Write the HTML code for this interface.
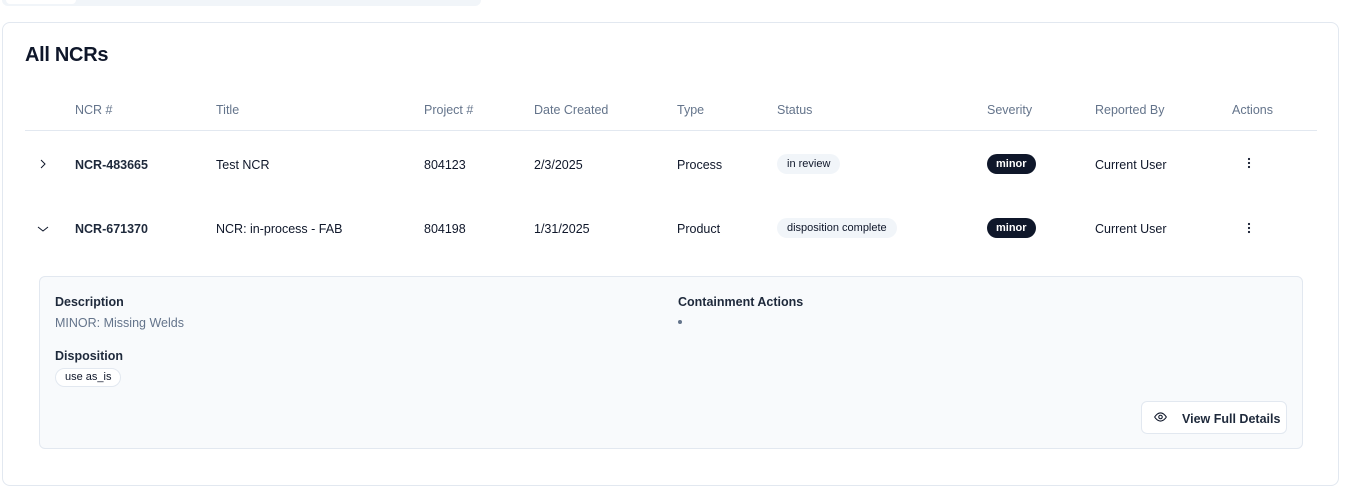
<!DOCTYPE html>
<html><head><style>
*{margin:0;padding:0;box-sizing:border-box}
body{width:1356px;height:496px;background:#fff;font-family:"Liberation Sans",sans-serif;color:#0f172a;position:relative;overflow:hidden;font-size:12.5px}
.a{position:absolute;white-space:nowrap}
.t{margin-top:1px}
.h{color:#64748b;font-size:12.5px}
.b{font-weight:bold;color:#1e293b}
.pill{position:absolute;border-radius:10px;font-size:11px;height:20px;line-height:20px;padding:0 10px}
</style></head><body>
<div class="a" style="left:2px;top:-6px;width:479px;height:12px;background:#f1f5f9;border-radius:6px"></div>
<div class="a" style="left:6px;top:-6px;width:70px;height:10px;background:#fff;border-radius:4px"></div>
<div class="a" style="left:2px;top:22px;width:1337px;height:464px;border:1px solid #e2e8f0;border-radius:8px"></div>
<div class="a t" style="left:25px;top:43px;font-size:20px;font-weight:600;letter-spacing:-0.3px">All NCRs</div>
<div class="a h t" style="left:75px;top:102px">NCR #</div>
<div class="a h t" style="left:216px;top:102px">Title</div>
<div class="a h t" style="left:424px;top:102px">Project #</div>
<div class="a h t" style="left:534px;top:102px">Date Created</div>
<div class="a h t" style="left:677px;top:102px">Type</div>
<div class="a h t" style="left:777px;top:102px">Status</div>
<div class="a h t" style="left:987px;top:102px">Severity</div>
<div class="a h t" style="left:1095px;top:102px">Reported By</div>
<div class="a h t" style="left:1232px;top:102px">Actions</div>
<div class="a" style="left:25px;top:130px;width:1292px;height:1px;background:#e2e8f0"></div>

<svg class="a" style="left:37px;top:158px" width="12" height="12" viewBox="0 0 12 12"><path d="M4 2l4 4-4 4" fill="none" stroke="#0f172a" stroke-width="1"/></svg>
<div class="a b t" style="left:75px;top:157px">NCR-483665</div>
<div class="a t" style="left:216px;top:157px">Test NCR</div>
<div class="a t" style="left:424px;top:157px">804123</div>
<div class="a t" style="left:534px;top:157px">2/3/2025</div>
<div class="a t" style="left:677px;top:157px">Process</div>
<div class="pill" style="left:777px;top:154px;background:#f1f5f9">in review</div>
<div class="pill b" style="left:987px;top:154px;background:#0f172a;color:#fff;padding:0 9px">minor</div>
<div class="a t" style="left:1095px;top:157px">Current User</div>
<svg class="a" style="left:1247px;top:157px" width="4" height="12"><circle cx="2" cy="2" r="1.1" fill="#0f172a"/><circle cx="2" cy="6" r="1.1" fill="#0f172a"/><circle cx="2" cy="10" r="1.1" fill="#0f172a"/></svg>

<svg class="a" style="left:37px;top:223px" width="12" height="12" viewBox="0 0 12 12"><path d="M1 4l5 4 5-4" fill="none" stroke="#0f172a" stroke-width="1"/></svg>
<div class="a b t" style="left:75px;top:221px">NCR-671370</div>
<div class="a t" style="left:216px;top:221px">NCR: in-process - FAB</div>
<div class="a t" style="left:424px;top:221px">804198</div>
<div class="a t" style="left:534px;top:221px">1/31/2025</div>
<div class="a t" style="left:677px;top:221px">Product</div>
<div class="pill" style="left:777px;top:218px;background:#f1f5f9">disposition complete</div>
<div class="pill b" style="left:987px;top:218px;background:#0f172a;color:#fff;padding:0 9px">minor</div>
<div class="a t" style="left:1095px;top:221px">Current User</div>
<svg class="a" style="left:1247px;top:222px" width="4" height="12"><circle cx="2" cy="2" r="1.1" fill="#0f172a"/><circle cx="2" cy="6" r="1.1" fill="#0f172a"/><circle cx="2" cy="10" r="1.1" fill="#0f172a"/></svg>

<div class="a" style="left:39px;top:276px;width:1264px;height:173px;background:#f8fafc;border:1px solid #e2e8f0;border-radius:6px"></div>
<div class="a b t" style="left:55px;top:294px;font-weight:600">Description</div>
<div class="a t" style="left:55px;top:315px;color:#64748b">MINOR: Missing Welds</div>
<div class="a b t" style="left:55px;top:348px;font-weight:600">Disposition</div>
<div class="a" style="left:55px;top:368px;height:19px;line-height:17px;padding:0 9px;border:1px solid #e2e8f0;border-radius:10px;background:#fff;font-size:11px">use as_is</div>
<div class="a b t" style="left:678px;top:294px;font-weight:600">Containment Actions</div>
<div class="a" style="left:678px;top:320px;width:4px;height:4px;border-radius:2px;background:#64748b"></div>
<div class="a" style="left:1141px;top:401px;width:146px;height:33px;background:#fff;border:1px solid #e2e8f0;border-radius:6px"></div>
<svg class="a" style="left:1153px;top:410px" width="15" height="14" viewBox="0 0 24 24"><path d="M2 12s4-7 10-7 10 7 10 7-4 7-10 7S2 12 2 12z" fill="none" stroke="#0f172a" stroke-width="1.8"/><circle cx="12" cy="12" r="3" fill="none" stroke="#0f172a" stroke-width="1.8"/></svg>
<div class="a b t" style="left:1182px;top:411px;font-weight:600">View Full Details</div>
</body></html>
